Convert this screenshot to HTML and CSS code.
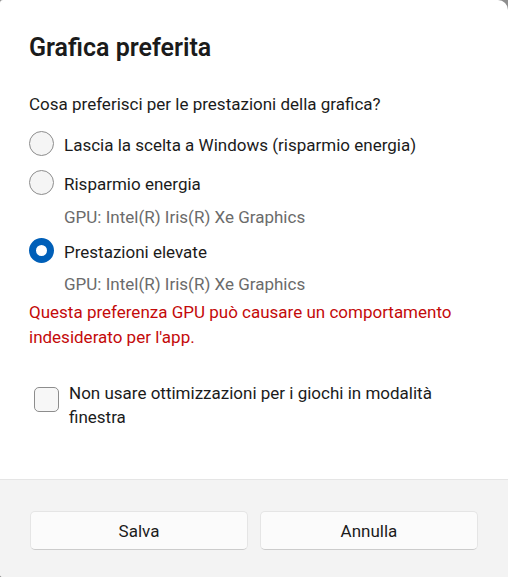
FILE: index.html
```html
<!DOCTYPE html>
<html lang="it">
<head>
<meta charset="utf-8">
<title>Grafica preferita</title>
<link rel="stylesheet" href="styles.css">
</head>
<body>
<div class="dialog">
  <div class="content">
    <h1 class="title">Grafica preferita</h1>
    <p class="question">Cosa preferisci per le prestazioni della grafica?</p>
    <div class="option first">
      <span class="radio"></span>
      <span class="label">Lascia la scelta a Windows (risparmio energia)</span>
    </div>
    <div class="option second">
      <span class="radio"></span>
      <span class="label">Risparmio energia</span>
    </div>
    <div class="sub">GPU: Intel(R) Iris(R) Xe Graphics</div>
    <div class="option third">
      <span class="radio checked"></span>
      <span class="label">Prestazioni elevate</span>
    </div>
    <div class="sub last">GPU: Intel(R) Iris(R) Xe Graphics</div>
    <p class="warning">Questa preferenza GPU può causare un comportamento indesiderato per l'app.</p>
    <div class="check-row">
      <span class="checkbox"></span>
      <span class="check-label">Non usare ottimizzazioni per i giochi in modalità finestra</span>
    </div>
  </div>
  <div class="footer">
    <button class="btn" type="button">Salva</button>
    <button class="btn" type="button">Annulla</button>
  </div>
</div>
</body>
</html>
```
FILE: styles.css
```css
html, body {
  margin: 0;
  padding: 0;
  background: #8e8e8e;
}

body {
  font-family: Roboto, "Noto Sans", sans-serif;
  color: #1b1b1b;
  font-size: 17px;
}

.dialog {
  width: 508px;
  height: 577px;
  background: #ffffff;
  border-radius: 3px 10px 0 3px;
  display: flex;
  flex-direction: column;
  overflow: hidden;
}

.content {
  flex: 1;
  padding: 32px 28px 0 28px;
}

.title {
  margin: 0;
  font-size: 25px;
  font-weight: 600;
  line-height: 32px;
  padding-left: 1px;
}

.question {
  margin: 28px 0 0 1px;
  line-height: 24px;
}

.option {
  display: flex;
  align-items: flex-start;
  gap: 10px;
  margin-left: 1px;
}

.option.first { margin-top: 15px; }
.option.second { margin-top: 12px; }
.option.third { margin-top: 9px; }

.radio {
  width: 25px;
  height: 25px;
  box-sizing: border-box;
  border-radius: 50%;
  border: 1px solid #8d8d8d;
  background: #f5f5f5;
  flex: none;
}

.radio.checked {
  border: 7px solid #005fb8;
  background: #ffffff;
}

.label {
  line-height: 25px;
  margin-top: 2px;
}

.sub {
  margin: 8px 0 0 36px;
  line-height: 24px;
  color: #6b6b6b;
}

.sub.last { margin-top: 7px; }

.warning {
  margin: 4px 0 0 1px;
  line-height: 25px;
  color: #c40a0a;
}

.check-row {
  display: flex;
  align-items: flex-start;
  gap: 10px;
  margin: 31px 0 0 6px;
}

.checkbox {
  width: 25px;
  height: 25px;
  box-sizing: border-box;
  border: 1px solid #8d8d8d;
  border-radius: 5px;
  background: #f7f7f7;
  margin-top: 6px;
  flex: none;
}

.check-label {
  line-height: 24px;
}

.footer {
  height: 97px;
  background: #f3f3f3;
  border-top: 1px solid #e5e5e5;
  box-sizing: content-box;
  display: flex;
  gap: 12px;
  padding: 0 30px;
  align-items: flex-start;
}

.btn {
  margin-top: 31px;
  flex: 1;
  height: 39px;
  background: #fbfbfb;
  border: 1px solid #e5e5e5;
  border-bottom-color: #cccccc;
  border-radius: 5px;
  font-family: inherit;
  font-size: 17px;
  font-weight: 400;
  color: #1b1b1b;
  padding: 0;
}
```
